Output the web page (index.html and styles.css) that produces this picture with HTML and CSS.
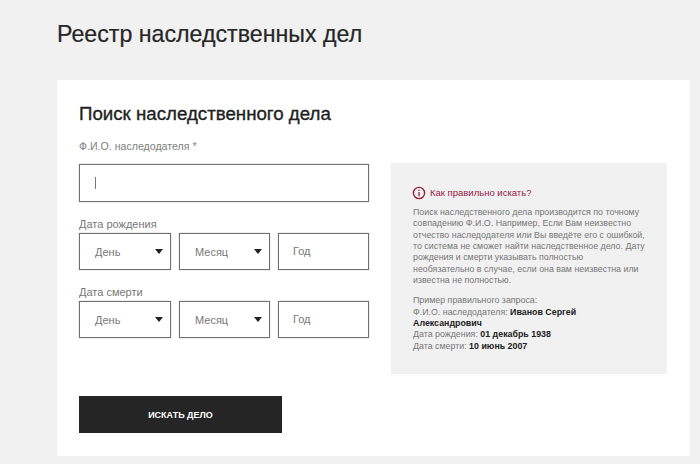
FILE: index.html
```html
<!DOCTYPE html>
<html lang="ru">
<head>
<meta charset="utf-8">
<title>Реестр наследственных дел</title>
<link rel="stylesheet" href="styles.css">
</head>
<body>
<main class="page">
  <h1 class="page-title">Реестр наследственных дел</h1>
  <section class="card">
    <div class="form-col">
      <h2 class="card-title">Поиск наследственного дела</h2>
      <div class="label label-name">Ф.И.О. наследодателя *</div>
      <div class="box box-name"><span class="caret"></span></div>
      <div class="label label-date">Дата рождения</div>
      <div class="date-row">
        <div class="box select"><span>День</span><i class="arrow"></i></div>
        <div class="box select"><span>Месяц</span><i class="arrow"></i></div>
        <div class="box year"><span>Год</span></div>
      </div>
      <div class="label label-date">Дата смерти</div>
      <div class="date-row">
        <div class="box select"><span>День</span><i class="arrow"></i></div>
        <div class="box select"><span>Месяц</span><i class="arrow"></i></div>
        <div class="box year"><span>Год</span></div>
      </div>
      <button class="submit" type="button">ИСКАТЬ ДЕЛО</button>
    </div>
    <aside class="help">
      <div class="help-head">
        <svg class="help-icon" viewBox="0 0 14 14" width="14" height="14" aria-hidden="true">
          <circle cx="7" cy="7" r="5.6" fill="none" stroke="#96203f" stroke-width="1.4"/>
          <path d="M7 3.8v1.1M7 6v4.2" stroke="#96203f" stroke-width="1.3" fill="none"/>
        </svg>
        <span>Как правильно искать?</span>
      </div>
      <p class="help-text">Поиск наследственного дела производится по точному совпадению Ф.И.О. Например, Если Вам неизвестно отчество наследодателя или Вы введёте его с ошибкой, то система не сможет найти наследственное дело. Дату рождения и смерти указывать полностью необязательно в случае, если она вам неизвестна или известна не полностью.</p>
      <p class="help-text help-example">Пример правильного запроса:<br>Ф.И.О. наследодателя: <b>Иванов Сергей</b><br><b>Александрович</b><br>Дата рождения: <b>01 декабрь 1938</b><br>Дата смерти: <b>10 июнь 2007</b></p>
    </aside>
  </section>
</main>
</body>
</html>
```

FILE: styles.css
```css
* { box-sizing: border-box; }
html, body { margin: 0; height: 100%; }
body {
  background: #f1f1f1;
  font-family: "Liberation Sans", Arial, sans-serif;
  color: #222;
  overflow: hidden;
}
.page { padding: 20px 10px 8px 57px; }
.page-title {
  margin: 0 0 32px;
  font-size: 23.2px;
  line-height: 28px;
  font-weight: 400;
  color: #262626;
  -webkit-text-stroke: 0.2px #262626;
}
.card {
  background: #fff;
  height: 376px;
  padding: 23px 23px 0 22px;
  display: flex;
  gap: 22px;
}
.form-col { width: 290px; flex: none; }
.card-title {
  margin: 0;
  font-size: 18.7px;
  line-height: 22px;
  font-weight: 400;
  color: #222;
  -webkit-text-stroke: 0.35px #222;
}
.label { font-size: 11px; color: #777; line-height: 14px; }
.label-name { margin-top: 14px; font-size: 10.6px; height: 13px; color: #808080; }
.label-date { margin-top: 15px; font-size: 11px; color: #777; height: 16px; line-height: 15px; }
.box {
  border: 1px solid #707070;
  box-shadow: 0 0 1px #999;
  background: #fff;
  font-size: 11px;
  color: #777;
}
.box-name {
  height: 38px;
  margin-top: 12px;
  padding-left: 15px;
  display: flex;
  align-items: center;
}
.caret { width: 1px; height: 12px; background: #777; }
.date-row { display: grid; grid-template-columns: 92px 91px 91px; gap: 8px; }
.select, .year { height: 37px; display: flex; align-items: center; }
.select { padding: 0 7px 0 15px; justify-content: space-between; }
.year { padding: 0 0 2px 14px; }
.arrow {
  width: 0;
  height: 0;
  border-left: 4px solid transparent;
  border-right: 4px solid transparent;
  border-top: 5px solid #222;
}
.submit {
  display: block;
  width: 203px;
  height: 37px;
  margin-top: 58px;
  border: 0;
  background: #252525;
  color: #fff;
  font: 700 9px "Liberation Sans", Arial, sans-serif;
}
.help {
  width: 276px;
  height: 211px;
  margin-top: 60px;
  padding: 23px 22px 0 22px;
  background: #f1f1f1;
  font-size: 8.85px;
  line-height: 11.35px;
  color: #777;
}
.help-head {
  display: flex;
  align-items: center;
  gap: 4px;
  margin-left: -1px;
  color: #96203f;
  height: 14px;
  font-size: 9.5px;
}
.help-text { margin: 7px 0 0; }
.help-example { margin-top: 9px; }
.help-example b { color: #222; }
```
